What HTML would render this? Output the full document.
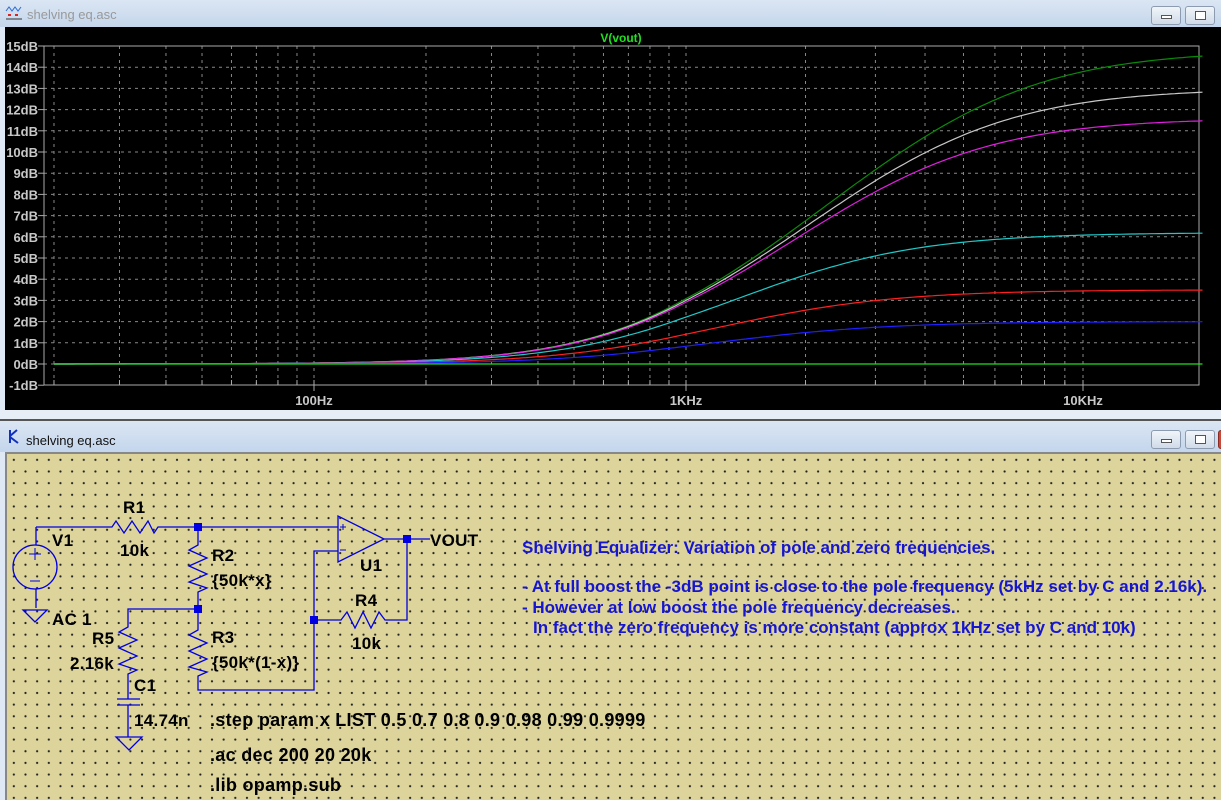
<!DOCTYPE html>
<html><head><meta charset="utf-8">
<style>
*{margin:0;padding:0;box-sizing:border-box}
body{width:1221px;height:800px;overflow:hidden;background:#dfe9f5;font-family:"Liberation Sans",sans-serif;position:relative}
.tb{position:absolute;left:0;width:1221px;background:linear-gradient(#dbe6f3,#c4d6ec);}
.ttl{position:absolute;font-size:13px;color:#999}
.btn{position:absolute;width:30px;height:19px;border:1px solid #8d9bb0;border-radius:3px;background:linear-gradient(#f1f5fa,#d0dbe9)}
.plot{position:absolute;left:5px;top:27px;width:1216px;height:383px;background:#000}
.sch{position:absolute;left:5px;top:452px;width:1216px;height:348px;background-color:#ddd49b;
background-image:radial-gradient(circle,#222 0.9px,transparent 1.3px);background-size:11.667px 11.667px;background-position:1px 0px;border-left:2px solid #888;border-top:2px solid #888}
svg text{font-family:"Liberation Sans",sans-serif}
</style></head><body>
<div class="tb" style="top:0;height:27px"></div>
<svg style="position:absolute;left:5px;top:6px" width="18" height="16"><path d="M1 5 L4 1 L7 5 L10 1 L13 5 L16 1" stroke="#2a6bd8" fill="none"/><rect x="3" y="8" width="3" height="2" fill="#d22"/><rect x="10" y="8" width="3" height="2" fill="#d22"/><line x1="1" y1="13" x2="17" y2="13" stroke="#333"/></svg>
<div class="ttl" style="left:27px;top:7px">shelving eq.asc</div>
<div class="btn" style="left:1151px;top:6px"><div style="position:absolute;left:9px;top:8px;width:11px;height:4px;border:1px solid #555;background:#fff"></div></div>
<div class="btn" style="left:1185px;top:6px"><div style="position:absolute;left:9px;top:4px;width:11px;height:9px;border:1px solid #555;background:#fff"></div></div>
<div class="plot"></div>
<svg id="pl" style="position:absolute;left:0;top:0" width="1221" height="410"></svg>
<div style="position:absolute;left:0;top:410px;width:1221px;height:10px;background:#e8eef6"></div>
<div style="position:absolute;left:0;top:419px;width:1221px;height:2px;background:#555"></div>
<div class="tb" style="top:421px;height:31px"></div>
<svg style="position:absolute;left:6px;top:428px" width="16" height="18"><path d="M4 2 V15 M4 8 L11 2 M4 9 L12 15" stroke="#1030c0" stroke-width="2" fill="none"/></svg>
<div class="ttl" style="left:26px;top:433px;color:#111">shelving eq.asc</div>
<div class="btn" style="left:1151px;top:430px"><div style="position:absolute;left:9px;top:8px;width:11px;height:4px;border:1px solid #555;background:#fff"></div></div>
<div class="btn" style="left:1185px;top:430px"><div style="position:absolute;left:9px;top:4px;width:11px;height:9px;border:1px solid #555;background:#fff"></div></div>
<div style="position:absolute;left:1218px;top:430px;width:10px;height:19px;background:#c9483a;border:1px solid #8a2a20;border-radius:3px"></div>
<div class="sch"></div>
<svg style="position:absolute;left:0;top:0" width="1221" height="800">
<g stroke="#0000e0" stroke-width="1.3" fill="none">
<path d="M36 527 V545 M36 589 V608"/>
<circle cx="35" cy="567" r="22"/>
<path d="M23 610 H47 L35 622 Z"/>
<path d="M36 527 H112 L116 521 L124 533 L132 521 L140 533 L148 521 L154 533 L158 527 H338"/>
<path d="M198 527 V545 L189 550 L207 558 L189 566 L207 574 L189 582 L207 588 L198 592 V609"/>
<path d="M198 609 V630 L189 635 L207 643 L189 651 L207 659 L189 667 L207 672 L198 676 V690 H314 V551 H338"/>
<path d="M198 609 H128 V627 L119 632 L137 640 L119 648 L137 656 L119 664 L137 670 L128 674 V699 M117 699 H140 M117 705 H140 M128 705 V737"/>
<path d="M116 737 H142 L129 750 Z"/>
<path d="M338 516 V562 L384 539 Z"/>
<path d="M384 539 H430"/>
<path d="M314 620 H341 L347 612 L355 628 L363 612 L371 628 L379 612 L385 620 H407 V539"/>
</g>
<g fill="#0000e0"><rect x="194" y="523" width="8" height="8"/><rect x="194" y="605" width="8" height="8"/><rect x="310" y="616" width="8" height="8"/><rect x="403" y="535" width="8" height="8"/></g>
<g stroke="#0000e0" stroke-width="1"><path d="M29 554 H41 M35 548 V560 M30 581 H40 M340 527 H346 M343 524 V530 M340 550 H346"/></g>
<g font-size="17" font-weight="bold" fill="#000" letter-spacing="0.3">
<text x="123" y="513">R1</text><text x="120" y="556">10k</text><text x="52" y="546">V1</text><text x="52" y="625">AC 1</text>
<text x="212" y="561">R2</text><text x="212" y="586">{50k*x}</text><text x="212" y="643">R3</text><text x="212" y="668">{50k*(1-x)}</text>
<text x="92" y="644">R5</text><text x="70" y="669">2.16k</text><text x="134" y="691">C1</text><text x="134" y="726">14.74n</text>
<text x="360" y="571">U1</text><text x="355" y="606">R4</text><text x="352" y="649">10k</text><text x="430" y="546">VOUT</text>
<text x="210" y="726" font-size="18">.step param x LIST 0.5 0.7 0.8 0.9 0.98 0.99 0.9999</text>
<text x="210" y="761" font-size="18">.ac dec 200 20 20k</text><text x="210" y="791" font-size="18">.lib opamp.sub</text>
</g>
<g font-size="17" font-weight="bold" fill="#1616d0">
<text x="522" y="553">Shelving Equalizer: Variation of pole and zero frequencies.</text>
<text x="522" y="592">- At full boost the -3dB point is close to the pole frequency (5kHz set by C and 2.16k).</text>
<text x="522" y="613">- However at low boost the pole frequency decreases.</text>
<text x="533" y="633">In fact the zero frequency is more constant (approx 1kHz set by C and 10k)</text>
</g>
</svg>
<script>
var s='',L=44,T=46,R=1199,B=385;
function fx(f){var d=Math.log10(f);if(d<=3)return 314+(d-2)*372;return 686+(d-3)*397;}
function y(db){return 364-db*21.2;}
for(var i=0;i<=14;i++){s+='<line x1="'+L+'" x2="'+R+'" y1="'+y(i)+'" y2="'+y(i)+'" stroke="#888" stroke-dasharray="3,4"/>';}
var fs=[20,30,40,50,60,70,80,90,100,200,300,400,500,600,700,800,900,1000,2000,3000,4000,5000,6000,7000,8000,9000,10000];
fs.forEach(function(f){var x=fx(f);s+='<line x1="'+x+'" x2="'+x+'" y1="'+T+'" y2="'+B+'" stroke="#888" stroke-dasharray="3,4"/><line x1="'+x+'" x2="'+x+'" y1="'+(B-5)+'" y2="'+(B+((f==100||f==1000||f==10000)?6:0))+'" stroke="#aaa"/>';});
s+='<rect x="'+L+'" y="'+T+'" width="'+(R-L)+'" height="'+(B-T)+'" fill="none" stroke="#aaa"/>';
for(var i=-1;i<=15;i++){s+='<text x="38" y="'+(y(i)+5)+'" text-anchor="end" font-size="13" font-weight="bold" fill="#c8c8c8">'+i+'dB</text><line x1="38" x2="44" y1="'+y(i)+'" y2="'+y(i)+'" stroke="#aaa"/>';}
[[100,'100Hz'],[1000,'1KHz'],[10000,'10KHz']].forEach(function(a){s+='<text x="'+fx(a[0])+'" y="405" text-anchor="middle" font-size="13" font-weight="bold" fill="#c8c8c8">'+a[1]+'</text>';});
s+='<text x="621" y="42" text-anchor="middle" font-size="12" font-weight="bold" fill="#20e020">V(vout)</text>';
var cs=[[14.8,950,'#0a8a0a'],[13.0,950,'#c8c8c8'],[11.6,950,'#e020e0'],[6.2,950,'#20c8c8'],[3.5,1000,'#ff2020'],[2.0,1050,'#2020ff'],[0,1000,'#20e020']];
cs.forEach(function(c){var fz=c[1],fp=fz*Math.pow(10,c[0]/20),d='';
for(var k=0;k<=300;k++){var f=20*Math.pow(1000,k/300);var db=10*Math.log10((1+f*f/fz/fz)/(1+f*f/fp/fp));d+=(k?'L':'M')+fx(f).toFixed(1)+' '+y(db).toFixed(1);}
s+='<path d="'+d+'" stroke="'+c[2]+'" fill="none" stroke-width="1.2"/>';});
document.getElementById('pl').innerHTML=s;
</script>
</body></html>
